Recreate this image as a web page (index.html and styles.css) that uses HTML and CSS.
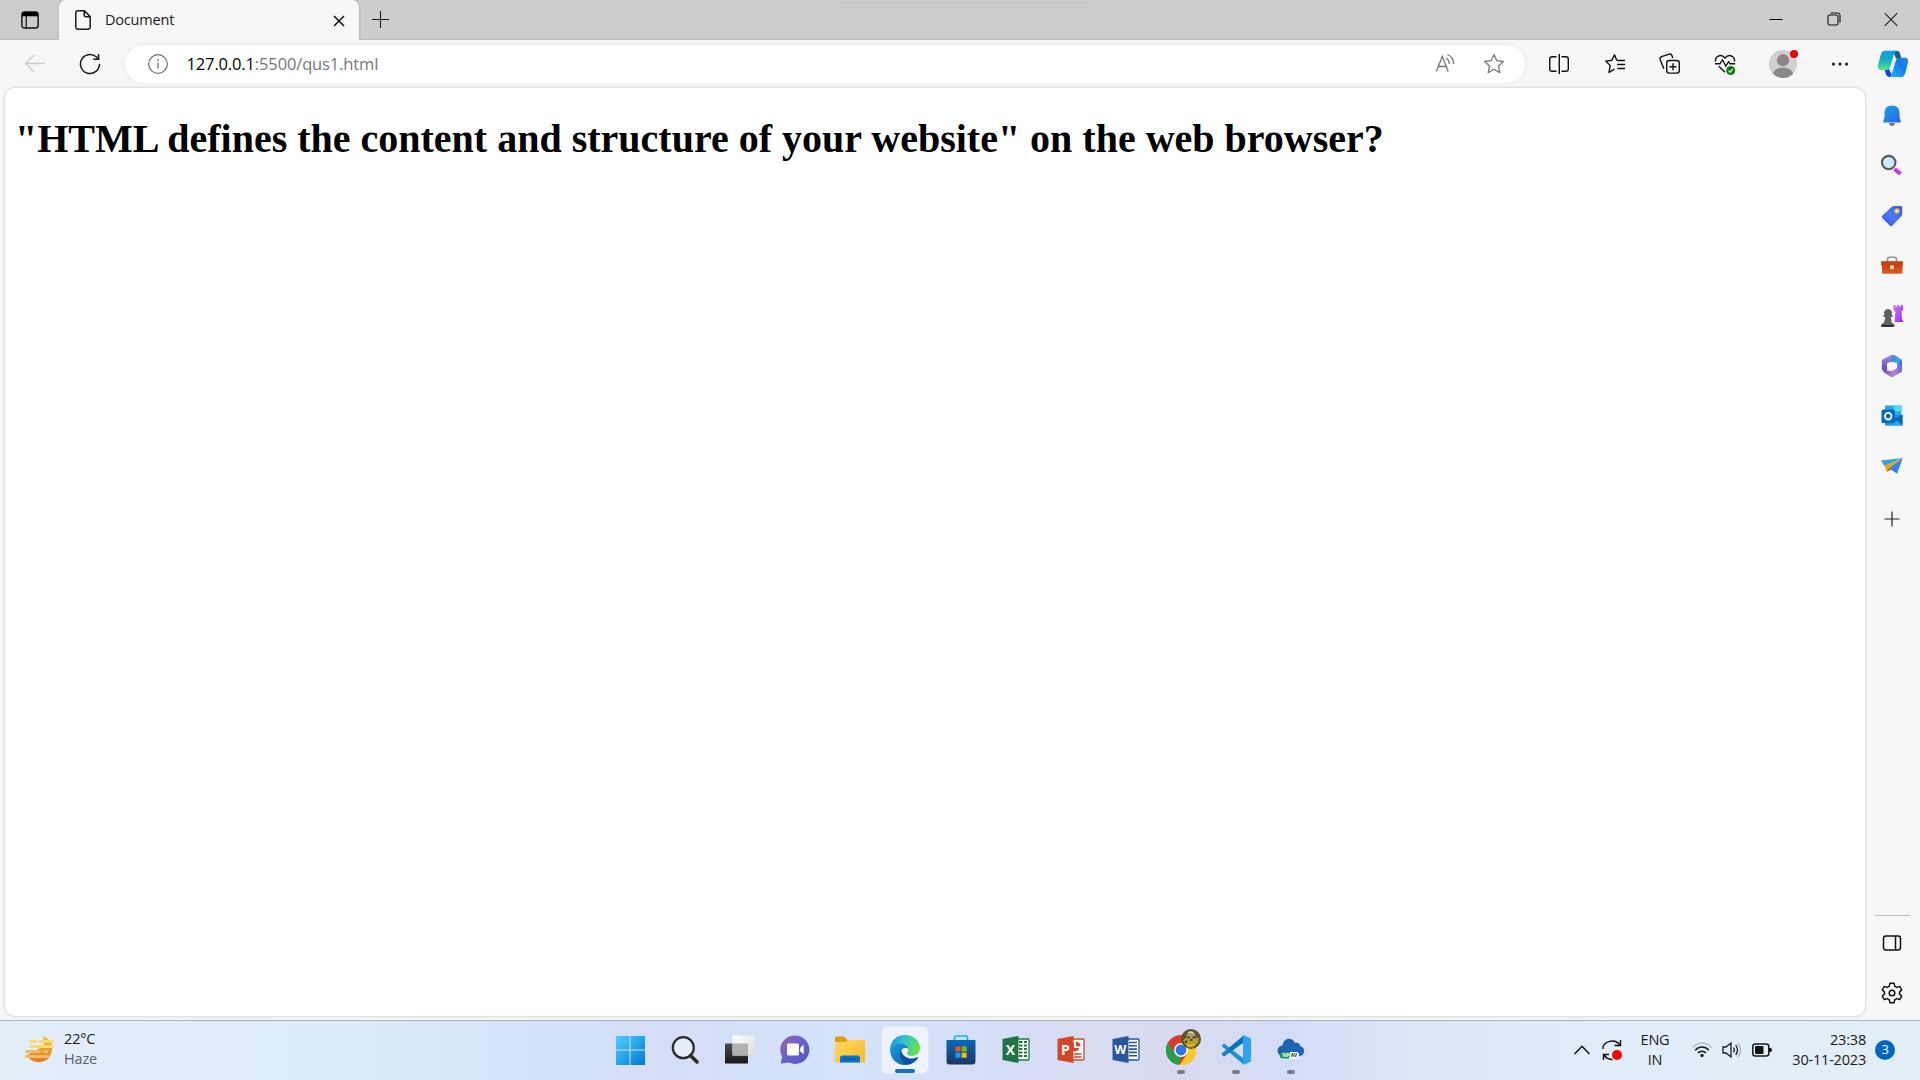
FILE: index.html
```html
<!DOCTYPE html>
<html lang="en">
<head>
<meta charset="utf-8">
<title>Document</title>
<link rel="stylesheet" href="styles.css">
</head>
<body>
<svg class="defs" width="0" height="0" aria-hidden="true">
  <defs>
    <linearGradient id="win" x1="0" y1="0" x2="1" y2="1"><stop offset="0" stop-color="#4ed0fb"/><stop offset="1" stop-color="#0078d4"/></linearGradient>
    <linearGradient id="bell" x1="0" y1="0" x2="1" y2="1"><stop offset="0" stop-color="#19a4dc"/><stop offset="1" stop-color="#2b62f4"/></linearGradient>
    <linearGradient id="tag" x1="1" y1="0" x2="0" y2="1"><stop offset="0" stop-color="#3b4fe0"/><stop offset=".5" stop-color="#4b7bff"/><stop offset="1" stop-color="#3a4be8"/></linearGradient>
    <linearGradient id="box" x1="0" y1="0" x2="0" y2="1"><stop offset="0" stop-color="#b63a10"/><stop offset="1" stop-color="#ea5a1c"/></linearGradient>
    <linearGradient id="rook" x1="0" y1="0" x2="1" y2="1"><stop offset="0" stop-color="#c77cff"/><stop offset="1" stop-color="#a726f2"/></linearGradient>
    <linearGradient id="cpa" x1="0" y1="0" x2="0" y2="1"><stop offset="0" stop-color="#0b9fe8"/><stop offset=".5" stop-color="#14b0bd"/><stop offset="1" stop-color="#5ee08c"/></linearGradient>
    <linearGradient id="cpb" x1="1" y1="0" x2="0" y2="1"><stop offset="0" stop-color="#2a86dc"/><stop offset=".4" stop-color="#1679ee"/><stop offset="1" stop-color="#1ab8ff"/></linearGradient>
    <linearGradient id="chat" x1="0" y1="0" x2="1" y2="1"><stop offset="0" stop-color="#a0609f"/><stop offset=".45" stop-color="#6b63cf"/><stop offset="1" stop-color="#4f50c4"/></linearGradient>
    <linearGradient id="fold" x1="0" y1="0" x2="1" y2="1"><stop offset="0" stop-color="#ffdc6b"/><stop offset="1" stop-color="#fbb71b"/></linearGradient>
    <linearGradient id="edgeTop" x1="0" y1="0" x2="1" y2=".3"><stop offset="0" stop-color="#1687d4"/><stop offset=".45" stop-color="#2cc2d5"/><stop offset="1" stop-color="#62e04e"/></linearGradient>
    <linearGradient id="edgeLow" x1="0" y1="0" x2="1" y2="1"><stop offset="0" stop-color="#1aa0e6"/><stop offset="1" stop-color="#0c59a4"/></linearGradient>
    <linearGradient id="store" x1="0" y1="0" x2="0" y2="1"><stop offset="0" stop-color="#0869b6"/><stop offset="1" stop-color="#1c3764"/></linearGradient>
    <linearGradient id="sun" x1="0" y1="0" x2="0" y2="1"><stop offset="0" stop-color="#f6c336"/><stop offset="1" stop-color="#ee741c"/></linearGradient>
    <linearGradient id="dark" x1="0" y1="0" x2="0" y2="1"><stop offset="0" stop-color="#4b4b4b"/><stop offset="1" stop-color="#181818"/></linearGradient>
    <linearGradient id="pale" x1="0" y1="0" x2="1" y2="1"><stop offset="0" stop-color="#fff"/><stop offset="1" stop-color="#d9dcdf"/></linearGradient>
    <linearGradient id="hexTop" x1="0" y1="0" x2="1" y2="1"><stop offset="0" stop-color="#3f6fd0"/><stop offset=".6" stop-color="#3fa9e6"/><stop offset="1" stop-color="#2a4fb0"/></linearGradient>
    <linearGradient id="hexLeft" x1="0" y1="0" x2="0" y2="1"><stop offset="0" stop-color="#a98be6"/><stop offset="1" stop-color="#5c3fa8"/></linearGradient>
    <linearGradient id="hexLow" x1="0" y1="0" x2="1" y2="0"><stop offset="0" stop-color="#7a4fae"/><stop offset=".6" stop-color="#b784d2"/><stop offset="1" stop-color="#5f6fd2"/></linearGradient>
  </defs>
</svg>

<header class="titlebar">
  <div class="workspace"><svg width="18" height="18" viewBox="0 0 18 18"><rect x=".9" y="1" width="16.2" height="16" rx="2.6" fill="none" stroke="#111" stroke-width="1.4"/><path d="M1 5.2V3a2 2 0 0 1 2-2h12a2 2 0 0 1 2 2v2.2z" fill="#000"/><path d="M5.2 5v12" stroke="#111" stroke-width="1.2"/></svg></div>
  <div class="tab">
    <svg class="page-icon" width="16" height="20" viewBox="0 0 16 20" fill="none" stroke="#1b1b1b" stroke-width="1.5"><path d="M3 .8h6.4l5.8 5.8V17a2.2 2.2 0 0 1-2.2 2.2H3A2.2 2.2 0 0 1 .8 17V3A2.2 2.2 0 0 1 3 .8zM9.2 1v4a1.8 1.8 0 0 0 1.8 1.8h4"/></svg>
    <span class="tab-title">Document</span>
    <svg class="tab-close" width="12" height="12" viewBox="0 0 12 12"><path d="M1 1l10 10M11 1L1 11" stroke="#111" stroke-width="1.5"/></svg>
  </div>
  <svg class="new-tab" width="18" height="18" viewBox="0 0 18 18"><path d="M8.500 1v17M0 9.500h17" stroke="#1b1b1b" stroke-width="1.1"/></svg>
  <div class="hint"></div>
  <div class="window-buttons">
    <svg width="14" height="14" viewBox="0 0 14 14"><path d="M.5 7.500h13" stroke="#000"/></svg>
    <svg width="14" height="14" viewBox="0 0 14 14" fill="none" stroke="#111" stroke-width="1.1"><rect x="1" y="3" width="10" height="10" rx="1.6"/><path d="M3.500 1h7A2.500 2.500 0 0 1 13 3.500v7"/></svg>
    <svg width="14" height="14" viewBox="0 0 14 14"><path d="M.7 1.200l12.600 12.600M13.300 1.200L.7 13.800" stroke="#222" stroke-width="1.1"/></svg>
  </div>
</header>

<nav class="toolbar">
  <svg width="32" height="32" viewBox="0 0 32 32" fill="none" stroke="#cdcdcd" stroke-width="1.3"><path d="M26 15.500H6.500M15 7l-8.500 8.500L15 24"/></svg>
  <svg width="32" height="32" viewBox="0 0 32 32" fill="none" stroke="#1b1b1b" stroke-width="1.5"><path d="M25.500 16a9.500 9.500 0 1 1-3.300-7.200l2.200 2.200M24.600 6v5.300h-5.300"/></svg>
  <div class="address">
    <svg class="info" width="20" height="20" viewBox="0 0 20 20"><circle cx="10" cy="10" r="9.300" fill="none" stroke="#6e6e6e" stroke-width="1.200"/><path d="M10 8.500v6" stroke="#6e6e6e" stroke-width="1.300"/><circle cx="10" cy="5.900" r=".9" fill="#6e6e6e"/></svg>
    <span class="url">127.0.0.1<span class="url-rest">:5500/qus1.html</span></span>
    <svg class="read" width="20" height="20" viewBox="0 0 20 20" fill="none" stroke="#777" stroke-width="1.300"><path d="M1.300 17.500L7.300 2.500l6 15M3.500 12.500h7.700M11 4a7 7 0 0 1 3.200 6M12.500 .5a9.500 9.500 0 0 1 6 9.500"/></svg>
    <svg class="star" width="22" height="22" viewBox="0 0 22 22" fill="none" stroke="#777" stroke-width="1.300" stroke-linejoin="round"><path d="M11 1.700l2.800 6 6.600.8-4.900 4.500 1.300 6.600-5.800-3.300-5.800 3.300 1.300-6.600L1.600 8.500l6.600-.8z"/></svg>
  </div>
  <svg width="32" height="32" viewBox="0 0 32 32" fill="none" stroke="#111" stroke-width="1.400"><path d="M13.500 8.800H9A2.300 2.300 0 0 0 6.700 11v10A2.300 2.300 0 0 0 9 23.200h4.500M18.500 8.800H23a2.300 2.300 0 0 1 2.300 2.200v10a2.300 2.300 0 0 1-2.300 2.200h-4.500M16.300 6v20"/></svg>
  <svg width="32" height="32" viewBox="0 0 32 32" fill="none" stroke="#111" stroke-width="1.400" stroke-linejoin="round"><path d="M20.500 12.500l-2.800-.4L15.500 6.800l-2.600 5.500-6.200.8 4.500 4.300-1.200 7 5.500-3.200M18.500 12.500h7.500M18 16.500h8M18.500 20.500h7.500"/></svg>
  <svg class="nudge" width="32" height="32" viewBox="0 0 32 32" fill="none" stroke="#111" stroke-width="1.400"><rect x="12.700" y="12.500" width="12.600" height="12.600" rx="2.500"/><path d="M19 15.300v7M15.500 18.800h7M9.800 20.700L6.200 11.500a2.300 2.300 0 0 1 1.400-2.900l7.600-2.500a2.300 2.300 0 0 1 2.800 1.500l.8 2.500"/></svg>
  <svg class="nudge" width="32" height="32" viewBox="0 0 32 32" fill="none" stroke="#111" stroke-width="1.400"><path d="M6.600 13.500c-1-4.500 5-8.800 9.400-3.500 4.400-5.300 10.400-1 9.400 3.500M6 15.800h5l2.500-4 3.300 6.400 2.800-4.500 1.500 2.100h5M9.800 18.200l6.200 6"/><circle cx="21.700" cy="22.500" r="4.500" fill="#107c10" stroke="none"/><path d="M19.600 22.700l1.500 1.500 2.800-3" stroke="#fff" stroke-width="1.200"/></svg>
  <svg width="32" height="32" viewBox="0 0 32 32"><circle cx="16" cy="16" r="14" fill="#d2d0ce"/><circle cx="16" cy="12.200" r="6.100" fill="#8a8886"/><path d="M6 25.700c2-8.400 18-8.400 20 0a14 14 0 0 1-20 0z" fill="#8a8886"/><circle cx="27" cy="6" r="4" fill="#e60000"/></svg>
  <svg width="32" height="32" viewBox="0 0 32 32" fill="#111"><circle cx="9.500" cy="16" r="1.500"/><circle cx="16" cy="16" r="1.500"/><circle cx="22.500" cy="16" r="1.500"/></svg>
  <svg class="nudge" width="32" height="32" viewBox="0 0 32 32"><path d="M16 2.700h3.500c2 0 3 1 3.600 3l1.400 5H19z" fill="#145e8e"/><path d="M16 29h-3.500c-2 0-3-1-3.600-3L7.500 21H12z" fill="#1a43dc"/><path d="M7.500 2.700H20c-2 1-2.700 2.700-3.300 4.800l-3.200 10.800C12.700 21 11.500 22 9 22H4.500C1.400 22 .3 20 1.200 16.500l2.300-9C4.400 4.300 5.500 2.700 7.500 2.700z" fill="url(#cpa)"/><path d="M24.500 29H12c2-1 2.700-2.700 3.300-4.800l3.200-10.700c.8-2.700 2-3.700 4.500-3.700h4.500c3.100 0 4.200 2 3.300 5.500l-2.300 9c-.9 3.100-2 4.700-4 4.700z" fill="url(#cpb)"/><path d="M20 10.500c-2 .2-3 1.300-3.700 3.300l-1.800 6c-.3 1-1 1.700-2 2 2-.2 3.200-1.300 3.800-3.300l1.700-5.500c.4-1.300 1-2.100 2-2.500z" fill="#f7f7f7"/></svg>
</nav>

<div class="content">
  <main class="viewport"><h1>"HTML defines the content and structure of your website" on the web browser?</h1></main>
  <aside class="sidebar">
    <svg width="24" height="24" viewBox="0 0 24 24"><path d="M9 19h6c0 4-6 4-6 0z" fill="#777"/><path d="M12 1.500c5 0 7.500 3 7.500 7.500v4l1.500 5.500H3L4.500 13V9C4.500 4.500 7 1.500 12 1.500z" fill="url(#bell)"/></svg>
    <svg width="24" height="24" viewBox="0 0 24 24"><path d="M14.500 15l6 5" stroke="#c43bea" stroke-width="4.200"/><circle cx="8.700" cy="8.500" r="6.700" fill="#c8ebfb" stroke="#5c5c5c" stroke-width="2.200"/><path d="M5 8c.5-2 1.500-3 3.500-3.500" stroke="#fff" fill="none"/></svg>
    <svg width="24" height="24" viewBox="0 0 24 24"><path d="M2.500 11.500l9-8.500c1-.7 2-1 3-1h6c1 0 1.700.7 1.700 1.700v6c0 1-.3 2-1 2.800L12.500 21.500c-1 1-1.800 1-2.800 0l-7.200-7.300c-.9-.9-.9-1.800 0-2.700z" fill="url(#tag)"/><circle cx="17" cy="7" r="2" fill="#dae8ff" stroke="#f3bf23" stroke-width="1.400"/></svg>
    <svg width="24" height="24" viewBox="0 0 24 24"><g transform="translate(0 .7)"><path d="M7.500 7V4.500c0-1.500.7-2 2-2h5c1.300 0 2 .5 2 2V7" fill="none" stroke="#8d9499" stroke-width="1.600"/><rect x="2" y="7" width="20.500" height="12" rx="1.500" fill="url(#box)"/><path d="M1 6.500h22v4l-4 2H5l-4-2z" fill="#c94212"/><rect x="10.300" y="10.500" width="3.500" height="4" rx=".7" fill="#d9e2e5"/></g></svg>
    <svg width="24" height="24" viewBox="0 0 24 24"><path d="M13.500 1h2v1.500h1.800V1h2v1.500H21V1h2v5l-1.500 1.500.5 7.500 1.500 3h-9l1-10-2-2z" fill="url(#rook)"/><path d="M4.500 11a4 4 0 1 1 7 0h1v2h-1.700l1 5.500 2.700 2V23H1v-2.500l3-2L5.300 13H3.500v-2z" fill="#606060"/><path d="M2 21.800h11" stroke="#292929" stroke-width="1.700"/></svg>
    <svg width="24" height="24" viewBox="0 0 24 24"><path d="M12 1q1-.6 2 0l7 4q1 .6 1 1.800V13l-5-1V9L7.500 8z" fill="url(#hexTop)"/><path d="M12.500 .8l-1 6L7 9.500v9l-4-2q-1.200-.7-1.200-2V7.200q0-1.200 1-1.800L11 1z" fill="url(#hexLeft)"/><path d="M22 10.500v6q0 1.200-1 1.800l-8 4.500q-1.200.6-2.400 0L2.500 17.500l4.500-1L12 17l5-3V10z" fill="url(#hexLow)"/><circle cx="12" cy="12" r="4" fill="#fafafa"/></svg>
    <svg width="24" height="24" viewBox="0 0 24 24"><path d="M5 1.500h16.500v11H5z" fill="#28a8ea"/><path d="M13.500 1.500h8v6h-8z" fill="#50d9ff"/><path d="M5 11h17.500v10.500H5z" fill="#1490df"/><path d="M13 16l9.500-5.500v11z" fill="#0d65b5"/><path d="M9 21.500l8-5 5.500 5z" fill="#28a8ea"/><rect x="1.500" y="5.500" width="13.500" height="13.500" rx="1.500" fill="#0569bd"/><circle cx="8.200" cy="12.200" r="3.300" fill="none" stroke="#fff" stroke-width="1.800"/></svg>
    <svg width="24" height="24" viewBox="0 0 24 24"><path d="M1 6.500L22.500 4 4.500 12z" fill="#28a7ec"/><path d="M22.500 4L11 14.500l6 5z" fill="#2b75e8"/><path d="M22.500 4L4.500 11.500l2.500 6.500 3-4z" fill="#f0a010"/><path d="M22.500 4L10.500 13v2.500l6.500 4z" fill="#3185f2"/><path d="M7 18l3-5 1 2.500z" fill="#a86100"/></svg>
    <svg class="add" width="24" height="24" viewBox="0 0 24 24"><path d="M12 4.500v15M4.500 12h15" stroke="#222" stroke-width="1.200"/></svg>
    <div class="divider"></div>
    <svg width="24" height="24" viewBox="0 0 24 24" fill="none" stroke="#111" stroke-width="1.500"><rect x="3.500" y="5" width="17" height="14" rx="2.400"/><path d="M15.500 5v14"/></svg>
    <svg width="24" height="24" viewBox="0 0 24 24" fill="none" stroke="#111" stroke-width="1.500" stroke-linejoin="round"><circle cx="12" cy="12" r="2.800"/><path d="M10 2.200h4l.7 3 2 1.200 3-1 2 3.500L19.500 11v2l2.200 2.100-2 3.500-3-1-2 1.200-.7 3h-4l-.7-3-2-1.200-3 1-2-3.500L4.500 13v-2L2.300 8.900l2-3.500 3 1 2-1.200z"/></svg>
  </aside>
</div>

<footer class="taskbar">
  <div class="weather">
    <svg width="30" height="30" viewBox="0 0 30 30"><path d="M19 1c5 2 10 6 9 14-1 7-5 12-13 12-6 0-10-2.500-12-7l17-9z" fill="url(#sun)"/><g stroke-linecap="round" stroke-width="3"><path d="M6.500 6.500h5M16 6.500h12.500M7 11.500h21" stroke="#fbdb70"/><path d="M2.500 16.500h13M20 16.500h3M2.500 21.500h22" stroke="#e9bd69"/></g></svg>
    <div class="weather-text"><span>22°C</span><span class="muted">Haze</span></div>
  </div>
  <div class="apps">
    <div class="app"><svg width="30" height="30" viewBox="0 0 30 30"><path d="M1 1h13.500v13.500H1zM15.500 1H30v13.500H15.500zM1 15.500h13.500V30H1zM15.500 15.500H30V30H15.500z" fill="url(#win)"/></svg></div>
    <div class="app"><svg width="30" height="30" viewBox="0 0 30 30" fill="none" stroke="#2c2c2c"><circle cx="13.300" cy="12.700" r="10.500" stroke-width="2.300" fill="#e6eefb"/><path d="M20.500 20.500l6.500 6.500" stroke-width="3.500" stroke-linecap="round"/></svg></div>
    <div class="app"><svg width="30" height="30" viewBox="0 0 30 30"><rect y="8.500" width="23" height="20" rx=".7" fill="url(#dark)"/><rect x="7.500" y=".5" width="22.500" height="20" rx=".7" fill="url(#pale)"/><path d="M7.500 8.500H23v12H7.500z" fill="#aeb0b2"/></svg></div>
    <div class="app"><svg width="30" height="30" viewBox="0 0 30 30"><path d="M15 .5a14.200 14.200 0 1 1-6 27L.7 28.500l1.500-6.800A14.200 14.200 0 0 1 15 .5z" fill="url(#chat)"/><rect x="7" y="8.500" width="12" height="12" rx="1.500" fill="#fff"/><path d="M20.200 12.800l3.500-3v9.500l-3.500-3z" fill="#fff"/></svg></div>
    <div class="app"><svg width="30" height="30" viewBox="0 0 30 30"><path d="M0 3a1.500 1.500 0 0 1 1.500-1.500H9L12.500 5H29v5H0z" fill="#dfa000"/><path d="M0 7h10l3-2h16a1 1 0 0 1 1 1v21.500H0z" fill="url(#fold)"/><path d="M5 27.500V23a2.500 2.500 0 0 1 2.500-2.500h15A2.500 2.500 0 0 1 25 23v4.500z" fill="#0b72c5"/><path d="M8.500 24h13" stroke="#034f8d" stroke-width="1.200"/></svg></div>
    <div class="app active"><svg width="32" height="32" viewBox="0 0 32 32"><path d="M1 15C2 6 8 1 16 1c9 0 15 6 15 13 0 5-4 8-8 8-3 0-5-1-5-2.500 0-1 1.500-1.500 1.500-4C19.500 12 16 10 12 10c-5 0-9 2-11 5z" fill="url(#edgeTop)"/><path d="M1 15c2-3.500 6-5.500 10.500-5.500 4.500 0 8 2.500 8 6-1-2.500-6-3-7.500 2C10 25 17 29 24 27.500 21 30 18 31 16 31 7 31 1 24 1 15z" fill="url(#edgeLow)"/><path d="M12 15.500C9 22 13 31 19 30.700c4-.5 8-3 10-6.700.5-1-.5-1-1-.7-6 3-15 .5-16-7.800z" fill="#0c529c"/></svg></div>
    <div class="app"><svg width="30" height="30" viewBox="0 0 30 30"><path d="M8.500 6V3a2 2 0 0 1 2-2h9a2 2 0 0 1 2 2v3" fill="none" stroke="#13b5f0" stroke-width="1.700"/><path d="M.5 5h29v21.500a3 3 0 0 1-3 3h-23a3 3 0 0 1-3-3z" fill="url(#store)"/><path d="M9.500 11.500h5v5h-5z" fill="#f35325"/><path d="M15.700 11.500h5v5h-5z" fill="#81bc06"/><path d="M9.500 17.700h5v5h-5z" fill="#05a6f0"/><path d="M15.700 17.700h5v5h-5z" fill="#ffba08"/></svg></div>
    <div class="app"><svg width="30" height="30" viewBox="0 0 30 30"><rect x="14" y="4" width="14" height="21" rx="1" fill="#fff" stroke="#217346" stroke-width="1.300"/><path d="M18 7h3.500M23 7h3M18 10.500h3.500M23 10.500h3M18 14h3.500M23 14h3M18 17.500h3.500M23 17.500h3M18 21h3.500M23 21h3" stroke="#217346" stroke-width="2.200"/><path d="M1.500 4L17.500 1v27l-16-3z" fill="#217346"/><text class="glyph" x="9.300" y="19.500">X</text></svg></div>
    <div class="app"><svg width="30" height="30" viewBox="0 0 30 30"><rect x="14" y="4" width="14" height="21" rx="1" fill="#fff" stroke="#d24726" stroke-width="1.300"/><path d="M18 8a4.200 4.200 0 1 0 5 5H18zM20 6.500a5 5 0 0 1 4.500 4.700H20z" fill="#d24726"/><path d="M18 19h7.500M18 22h7.500" stroke="#d24726" stroke-width="1.300"/><path d="M1.500 4L17.500 1v27l-16-3z" fill="#d24726"/><text class="glyph" x="9.500" y="19.500">P</text></svg></div>
    <div class="app"><svg width="30" height="30" viewBox="0 0 30 30"><rect x="14" y="4" width="14" height="21" rx="1" fill="#fff" stroke="#2b579a" stroke-width="1.300"/><path d="M18 7.500h8M18 10.800h8M18 14.100h8M18 17.400h8M18 20.700h8" stroke="#2b579a" stroke-width="1.600"/><path d="M1.500 4L17.500 1v27l-16-3z" fill="#2b579a"/><text class="glyph wide" x="9.300" y="19">W</text></svg></div>
    <div class="app running"><svg width="30" height="30" viewBox="0 0 30 30"><circle cx="15" cy="15" r="15" fill="#dd3a2f"/><path d="M2 7.500l6.500 11L15 22.300 12 30A15 15 0 0 1 2 7.500z" fill="#22a04c"/><path d="M15 8h13.200A15 15 0 0 1 13.500 30l7.500-11z" fill="#fdcb1c"/><circle cx="15" cy="15" r="6.900" fill="#fff"/><circle cx="15" cy="15" r="5.400" fill="#2879e8"/></svg>
      <svg class="profile" width="20" height="20" viewBox="0 0 20 20"><circle cx="10" cy="10" r="10" fill="#5d5221"/><path d="M2 12c2-3 4-4 7-4s7 2 9 0l-1 6-5 4.500H7z" fill="#b79d22"/><path d="M5.500 5.500c2-3.500 7-3.500 9 0l-.5 4H6z" fill="#a59a72"/><path d="M7 3.700c2-1 4-1 5.500.5" stroke="#ddd6bd" stroke-width="1.500" fill="none"/><path d="M6.500 8.500h2.500M11.500 8.500H14M4 13.500l2-1.500M9 11h2.500" stroke="#332d1a" stroke-width="1.600"/><path d="M6 16c3 1 5 1 8-1" stroke="#dfc52f" stroke-width="1.500" fill="none"/></svg></div>
    <div class="app running"><svg width="30" height="30" viewBox="0 0 30 30"><path d="M3 8.500L22 23v6L.5 11z" fill="#1d91da"/><path d="M.5 19L22 1v7L3 21.500z" fill="#0873bd"/><path d="M.5 19L3 21.500 10 16 7 13.500z" fill="#1583cb"/><path d="M22 0l8 3.500v23L22 30z" fill="#29a5ef"/></svg></div>
    <div class="app running"><svg width="30" height="30" viewBox="0 0 30 30"><path d="M6 21C0 20 0 11 6.500 10.500 7 3 16 1 19 8c4-1 5 1 5 3 6 1 5 10 0 10z" fill="#1b65b4"/><rect x="5" y="17" width="18" height="6.500" rx="2.500" fill="#fff"/><path d="M7 17h7l-1 6.500H7a3.200 3.200 0 0 1 0-6.500z" fill="#0c9459"/><text class="tiny" x="9.800" y="22.200" fill="#fff">NP</text><text class="tiny" x="18" y="22.200" fill="#222">AV</text></svg></div>
  </div>
  <div class="tray">
    <svg class="chevron" width="18" height="12" viewBox="0 0 18 12"><path d="M1.500 10L9 2.300l7.500 7.700" fill="none" stroke="#111" stroke-width="1.500"/></svg>
    <svg class="update" width="20" height="20" viewBox="0 0 20 20" fill="none" stroke="#111" stroke-width="1.400"><path d="M.8 9C1 1 13-2 18 5.200M18.500 0v5.500h-6M1.500 20v-5.500H7M2 15c2 3 5 4.500 8.500 4.500"/><circle cx="15" cy="15" r="5" fill="#f00" stroke="none"/></svg>
    <div class="lang"><span>ENG</span><span>IN</span></div>
    <svg class="wifi" width="20" height="16" viewBox="0 0 20 16" fill="none" stroke="#1b1b1b" stroke-width="1.500"><path d="M.7 5.500C6-.5 14-.5 19.300 5.500" stroke="#b2bdc8"/><path d="M3.200 8.200C7 4 13 4 16.800 8.200M6 11c2.300-2.500 5.700-2.500 8 0"/><circle cx="10" cy="13.500" r="1.700" fill="#1b1b1b" stroke="none"/></svg>
    <svg class="sound" width="20" height="18" viewBox="0 0 20 18" fill="none" stroke="#1b1b1b" stroke-width="1.300"><path d="M1 6h3l5-4v14l-5-4H1zM11.500 6.500q1.700 2.500 0 5M13.700 4q3.500 5 0 10"/><path d="M16 2q5 7 0 14" stroke="#a9b3bd"/></svg>
    <svg class="battery" width="20" height="14" viewBox="0 0 20 14"><rect x=".8" y="1" width="16" height="12" rx="2.500" fill="none" stroke="#1b1b1b" stroke-width="1.500"/><rect x="3" y="3" width="8.500" height="8" rx="1" fill="#111"/><path d="M17 5h1.500q1.500 0 1.500 2t-1.500 2H17z" fill="#111"/></svg>
    <div class="clock"><span>23:38</span><span>30-11-2023</span></div>
    <div class="badge">3</div>
  </div>
</footer>
</body>
</html>
```
FILE: styles.css
```css
* { box-sizing: border-box; }
html, body { height: 100%; }
body {
  margin: 0;
  display: flex;
  flex-direction: column;
  overflow: hidden;
  background: #f7f7f7;
  color: #1b1b1b;
  font-family: "Open Sans", "Noto Sans", sans-serif;
  font-size: 14.5px;
}
svg { display: block; flex: none; overflow: visible; }
.defs { position: absolute; }

.titlebar {
  height: 40px;
  flex: none;
  display: flex;
  background: #cdcdcd;
  box-shadow: inset 0 -1px #bdbdbd;
}
.workspace { width: 59px; padding: 11px 0 0 21px; }
.tab {
  width: 300px;
  height: 40px;
  display: flex;
  align-items: center;
  padding: 0 14px 0 16px;
  background: #f7f7f7;
  border-radius: 7px 7px 0 0;
  box-shadow: 0 0 3px rgba(0, 0, 0, .2);
  clip-path: inset(0 -4px 0 -4px);
}
.tab-title { margin-left: 14px; padding-bottom: 2px; flex: 1; font-size: 14.5px; letter-spacing: -.2px; }
.tab-close { margin-top: 2px; }
.new-tab { margin: 10px 0 0 13px; }
.hint { width: 270px; height: 1px; margin-left: 439px; box-shadow: 0 0 10px 1px rgba(0, 0, 0, .05); }
.window-buttons { margin-left: auto; padding: 12px 22px 0 0; display: flex; gap: 43.5px; }

.toolbar {
  height: 48px;
  flex: none;
  padding-left: 8px;
  display: grid;
  grid-template-columns: 54px 56px 1413px 56px 56px 55px 55px 60px 54px 53px;
  align-items: center;
  justify-items: center;
}
.nudge { margin-right: 1px; }
.address {
  width: 1400px;
  height: 38px;
  display: flex;
  align-items: center;
  padding: 0 20px 0 23px;
  border-radius: 19px;
  background: #fff;
  box-shadow: 0 0 4px rgba(0, 0, 0, .08);
}
.url { margin-left: 19px; padding-bottom: 2px; flex: 1; color: #000; font-size: 16.5px; letter-spacing: -.14px; }
.url-rest { color: #767676; }
.star { margin-left: 28px; }

.content { flex: 1; min-height: 0; display: flex; }
.viewport {
  width: 1860px;
  margin: 0 0 4px 5px;
  padding: 0 10px;
  background: #fff;
  border-radius: 10px;
  box-shadow: 0 0 3px rgba(0, 0, 0, .25);
}
h1 {
  margin: 28px 0 0;
  font: bold 40px/46px "Liberation Serif", serif;
  color: #000;
  white-space: nowrap;
}
.sidebar {
  flex: 1;
  display: flex;
  flex-direction: column;
  align-items: center;
  gap: 26px;
  padding: 16px 1px 15px 0;
}
.add { margin-top: 3px; }
.divider { width: 35px; height: 1px; margin: auto 0 -11px; background: #bcbcbc; }

.taskbar {
  height: 60px;
  flex: none;
  display: grid;
  grid-template-columns: 602.5px 716px 1fr;
  border-top: 1px solid #a9b4c3;
  background: linear-gradient(90deg, #e3eef9 0, #deebf9 18%, #d3e1f9 29%, #d5def6 35%, #d3e3fa 44%, #d6def6 52%, #d8dbef 61%, #d4ddf6 67%, #dce8f7 75%, #e1edf8 84%, #e3eef8 100%);
}
.weather { display: flex; padding: 14px 0 0 24px; }
.weather-text { display: flex; flex-direction: column; margin: -6px 0 0 10px; line-height: 20px; letter-spacing: -.15px; }
.muted { color: #5b6269; }
.apps { display: grid; grid-template-columns: repeat(13, 55.080px); }
.app { position: relative; display: flex; align-items: center; justify-content: center; padding-bottom: 1px; }
.active { width: 48px; height: 48px; margin: 5px auto 0; background: #edf2fd; border: 1px solid #e3e8f3; border-radius: 6px; }
.active::after, .running::after {
  content: "";
  position: absolute;
  bottom: 0;
  width: 20px;
  height: 4px;
  border-radius: 2px;
  background: #0874d0;
}
.running::after { bottom: 6px; width: 8px; background: #7b7e87; }
.profile { position: absolute; left: 28px; top: 8px; }
.glyph { font: bold 14px "Open Sans", sans-serif; fill: #fff; text-anchor: middle; }
.wide { font-size: 12.5px; }
.tiny { font: bold 5px "Open Sans", sans-serif; text-anchor: middle; }
.tray { display: flex; align-items: center; justify-content: flex-end; padding: 0 25px 1px 0; line-height: 20px; letter-spacing: -.2px; }
.lang { width: 34px; margin-left: 16px; display: flex; flex-direction: column; align-items: center; }
.update { margin-left: 11px; }
.wifi { margin-left: 20px; }
.sound { margin-left: 10px; }
.battery { margin-left: 10px; }
.clock { width: 80px; margin: -1px 0 0 14px; display: flex; flex-direction: column; align-items: flex-end; white-space: nowrap; }
.badge { width: 20px; height: 20px; margin-left: 9px; border-radius: 50%; background: #0067c0; color: #fff; font-size: 13px; line-height: 19px; text-align: center; }
```
